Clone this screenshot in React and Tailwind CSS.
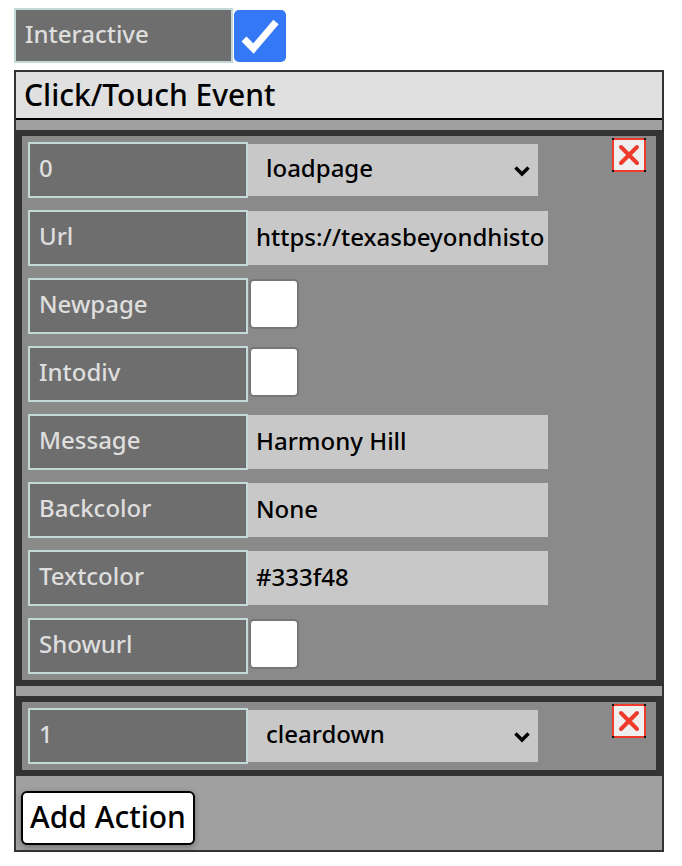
import React, { useState } from 'react';

const labelCls =
  "w-[220px] h-[56px] shrink-0 flex items-center pl-[9px] pb-[4px] bg-[#6e6e6e] border-2 border-[#c4d8d8] text-[#dedede] text-[24px]";

function CloseIcon() {
  return (
    <svg width="34" height="34" viewBox="0 0 34 34">
      <rect x="1" y="1" width="32" height="32" fill="#efefef" stroke="#ee3b2b" strokeWidth="2" />
      <path d="M9 9 L25 25 M25 9 L9 25" stroke="#ee3b2b" strokeWidth="4" strokeLinecap="round" />
      <rect x="0" y="0" width="2" height="2" fill="#111" />
      <rect x="32" y="0" width="2" height="2" fill="#111" />
      <rect x="0" y="32" width="2" height="2" fill="#111" />
      <rect x="32" y="32" width="2" height="2" fill="#111" />
    </svg>
  );
}

function Chevron() {
  return (
    <svg width="18" height="12" viewBox="0 0 18 12" className="absolute right-[7px] top-[21px] pointer-events-none">
      <path d="M2.5 2.5 L9 9 L15.5 2.5" fill="none" stroke="#000" strokeWidth="3.5" />
    </svg>
  );
}

function SelectBox({ value }) {
  return (
    <div className="relative w-[290px] h-[52px]">
      <select
        defaultValue={value}
        className="appearance-none w-full h-full bg-[#c8c8c8] text-black text-[24px] font-medium pl-[18px] pb-[4px] outline-none"
      >
        <option value={value}>{value}</option>
      </select>
      <Chevron />
    </div>
  );
}

function TextRow({ label, value }) {
  return (
    <div className="flex items-center">
      <div className={labelCls}>{label}</div>
      <input
        readOnly
        value={value}
        className="w-[300px] h-[54px] bg-[#c8c8c8] text-black text-[24px] font-medium pl-2 pr-[3px] pb-[4px] outline-none"
      />
    </div>
  );
}

function CheckRow({ label }) {
  const [on, setOn] = useState(false);
  return (
    <div className="flex items-start">
      <div className={labelCls}>{label}</div>
      <button
        onClick={() => setOn(!on)}
        className="ml-px mt-px w-[50px] h-[50px] bg-white border-2 border-[#767676] rounded-[5px]"
      />
    </div>
  );
}

function ActionBox({ index, type, children }) {
  return (
    <div className="relative border-[6px] border-[#333] bg-[#8a8a8a] p-[6px] flex flex-col gap-3">
      <div className="flex items-center">
        <div className={labelCls}>{index}</div>
        <SelectBox value={type} />
      </div>
      {children}
      <button className="absolute top-[2px] right-[10px]">
        <CloseIcon />
      </button>
    </div>
  );
}

export default function App() {
  const [interactive, setInteractive] = useState(true);

  return (
    <div className="bg-white min-h-screen pt-2 pl-[14px] font-['Noto_Sans',sans-serif] font-medium">
      <div className="flex items-center">
        <div className="w-[219px] h-[55px] flex items-center pl-[9px] pb-[4px] bg-[#6e6e6e] border-2 border-[#c4d8d8] text-[#dedede] text-[24px]">
          Interactive
        </div>
        <button
          onClick={() => setInteractive(!interactive)}
          className="ml-px w-[52px] h-[52px] rounded-[5px] bg-[#3478f6] flex items-center justify-center"
        >
          {interactive && (
            <svg width="52" height="52" viewBox="0 0 52 52">
              <path d="M10 29 L19.5 38.5 L42 12" fill="none" stroke="#fff" strokeWidth="7" />
            </svg>
          )}
        </button>
      </div>

      <div className="mt-[7px] w-[650px] border-2 border-[#333] bg-[#a0a0a0]">
        <div className="h-[48px] flex items-center pl-2 pb-[2px] bg-[#e0e0e0] border-b-2 border-black text-black text-[30px]">
          Click/Touch Event
        </div>
        <div className="pt-[10px] flex flex-col gap-[10px]">
          <ActionBox index="0" type="loadpage">
            <TextRow label="Url" value="https://texasbeyondhistory.net/harmony/index.html" />
            <CheckRow label="Newpage" />
            <CheckRow label="Intodiv" />
            <TextRow label="Message" value="Harmony Hill" />
            <TextRow label="Backcolor" value="None" />
            <TextRow label="Textcolor" value="#333f48" />
            <CheckRow label="Showurl" />
          </ActionBox>
          <ActionBox index="1" type="cleardown" />
        </div>
        <div className="pt-[15px] pb-[5px] px-[5px]">
          <button className="w-[174px] h-[54px] pb-[2px] bg-white border-2 border-black rounded-[6px] shadow-[0_2px_6px_rgba(0,0,0,0.3)] text-black text-[30px] leading-none">
            Add Action
          </button>
        </div>
      </div>
    </div>
  );
}
